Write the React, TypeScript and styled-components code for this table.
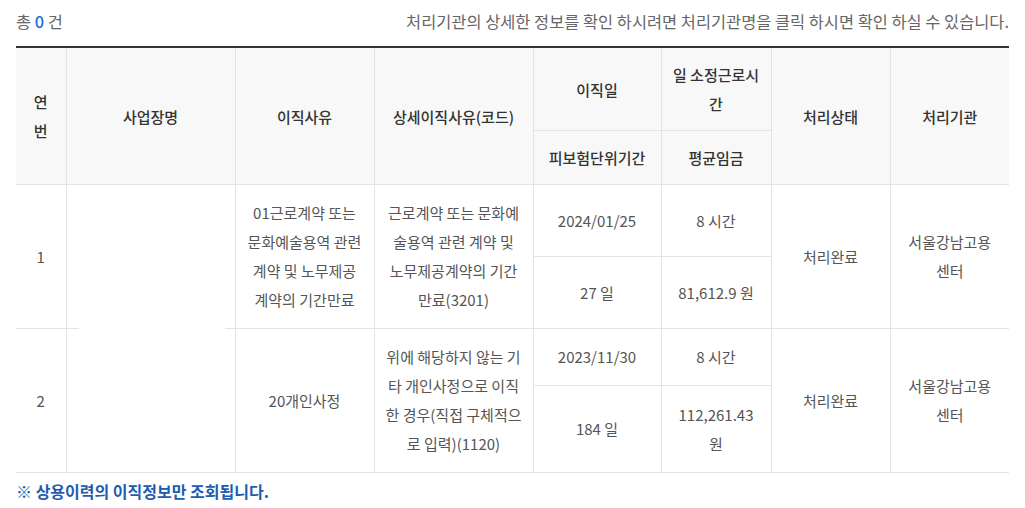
import React from "react";
import styled, { createGlobalStyle } from "styled-components";

const Global = createGlobalStyle`
  html, body { margin: 0; padding: 0; background: #fff; }
  body { font-family: "Noto Sans CJK KR", "Noto Sans", sans-serif; color: #555; }
`;

const Page = styled.div`
  padding: 0 16px;
  font-size: 15px;
  line-height: 29px;
`;

const TopBar = styled.div`
  display: flex;
  justify-content: space-between;
  align-items: center;
  padding-top: 7px;
  margin-bottom: 10px;
  color: #666;
  font-size: 16.4px;
`;

const Count = styled.b`
  color: #1a6fd8;
  font-weight: 500;
`;

const Table = styled.table`
  width: 993px;
  border-collapse: collapse;
  table-layout: fixed;
  border-top: 2px solid #333;
`;

const Th = styled.th`
  background: #f8f8f8;
  color: #333;
  font-weight: 500;
  padding: 12px 10px;
  text-align: center;
  vertical-align: middle;
  border: 1px solid #e3e3e3;
  border-top: none;
  &:first-child { border-left: none; padding: 12px 13px; }
  &:last-child { border-right: none; }
`;

const Td = styled.td<{ $gap?: boolean; $first?: boolean; $last?: boolean; $wide?: boolean }>`
  padding: ${(p) => (p.$wide ? "13px 9.5px 14px" : "13px 12px 14px")};
  text-align: center;
  vertical-align: middle;
  border: 1px solid #e3e3e3;
  border-top: none;
  ${(p) => (p.$first ? "border-left: none;" : "")}
  ${(p) => (p.$last ? "border-right: none;" : "")}
  ${(p) =>
    p.$gap
      ? `border-bottom: none;
         background:
           linear-gradient(#e3e3e3, #e3e3e3) left bottom / 12px 1px no-repeat,
           linear-gradient(#e3e3e3, #e3e3e3) right bottom / 10px 1px no-repeat;`
      : ""}
`;

const Line = styled.span`
  display: block;
`;

const Note = styled.p`
  margin: 4px 0 0;
  color: #1d5cb0;
  font-weight: 700;
  font-size: 16px;
`;

type Row = {
  no: string;
  reason: string;
  detail: string[];
  date: string;
  hours: string;
  period: string;
  wage: string;
  status: string;
  office: string;
  gap?: boolean;
};

const rows: Row[] = [
  {
    no: "1",
    reason: "01근로계약 또는 문화예술용역 관련 계약 및 노무제공 계약의 기간만료",
    detail: ["근로계약 또는 문화예", "술용역 관련 계약 및", "노무제공계약의 기간", "만료(3201)"],
    date: "2024/01/25",
    hours: "8 시간",
    period: "27 일",
    wage: "81,612.9 원",
    status: "처리완료",
    office: "서울강남고용센터",
    gap: true,
  },
  {
    no: "2",
    reason: "20개인사정",
    detail: ["위에 해당하지 않는 기", "타 개인사정으로 이직", "한 경우(직접 구체적으", "로 입력)(1120)"],
    date: "2023/11/30",
    hours: "8 시간",
    period: "184 일",
    wage: "112,261.43 원",
    status: "처리완료",
    office: "서울강남고용센터",
  },
];

const widths = [50, 169, 139, 159, 128, 110, 119, 119];

export default function App() {
  return (
    <>
      <Global />
      <Page>
        <TopBar>
          <span>
            총 <Count>0</Count> 건
          </span>
          <span>처리기관의 상세한 정보를 확인 하시려면 처리기관명을 클릭 하시면 확인 하실 수 있습니다.</span>
        </TopBar>
        <Table>
          <colgroup>
            {widths.map((w, i) => (
              <col key={i} style={{ width: w }} />
            ))}
          </colgroup>
          <thead>
            <tr>
              <Th rowSpan={2}>연번</Th>
              <Th rowSpan={2}>사업장명</Th>
              <Th rowSpan={2}>이직사유</Th>
              <Th rowSpan={2}>상세이직사유(코드)</Th>
              <Th>이직일</Th>
              <Th>일 소정근로시간</Th>
              <Th rowSpan={2}>처리상태</Th>
              <Th rowSpan={2}>처리기관</Th>
            </tr>
            <tr>
              <Th>피보험단위기간</Th>
              <Th>평균임금</Th>
            </tr>
          </thead>
          <tbody>
            {rows.map((r) => (
              <React.Fragment key={r.no}>
                <tr>
                  <Td rowSpan={2} $first>
                    {r.no}
                  </Td>
                  <Td rowSpan={2} $gap={r.gap}></Td>
                  <Td rowSpan={2}>{r.reason}</Td>
                  <Td rowSpan={2} $wide>
                    {r.detail.map((l, i) => (
                      <Line key={i}>{l}</Line>
                    ))}
                  </Td>
                  <Td>{r.date}</Td>
                  <Td>{r.hours}</Td>
                  <Td rowSpan={2}>{r.status}</Td>
                  <Td rowSpan={2} $last>
                    {r.office}
                  </Td>
                </tr>
                <tr>
                  <Td>{r.period}</Td>
                  <Td>{r.wage}</Td>
                </tr>
              </React.Fragment>
            ))}
          </tbody>
        </Table>
        <Note>※ 상용이력의 이직정보만 조회됩니다.</Note>
      </Page>
    </>
  );
}
